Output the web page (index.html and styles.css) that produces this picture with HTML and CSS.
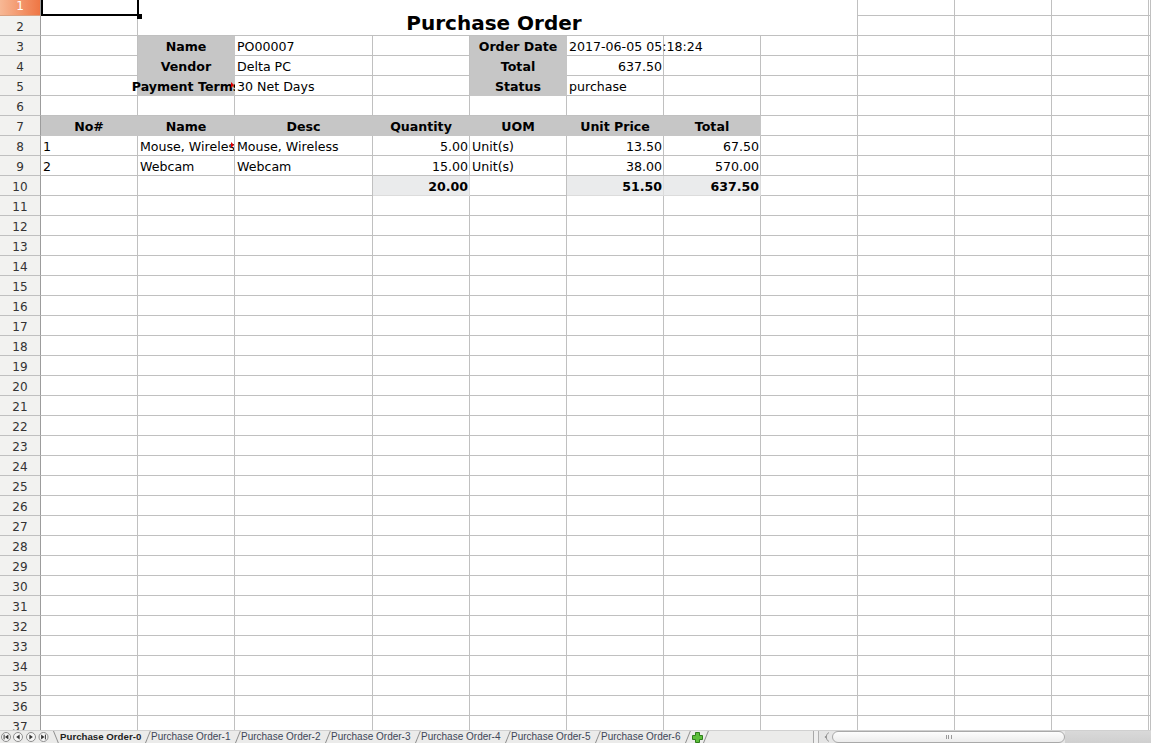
FILE: index.html
```html
<!DOCTYPE html>
<html>
<head>
<meta charset="utf-8">
<title>Purchase Order</title>
<link rel="stylesheet" href="styles.css">
</head>
<body>
<div class="sheet">
  <div class="grid">
    <div class="rh r1">1</div><div class="sel"></div><div class="title">Purchase Order</div><div></div><div></div><div></div><div></div>
    <div class="rh">2</div><div></div><div></div><div></div><div></div><div></div>
    <div class="rh">3</div><div></div><div class="hd">Name</div><div>PO00007</div><div></div><div class="hd">Order Date</div><div>2017-06-05 05:18:24</div><div></div><div></div><div></div><div></div><div></div><div></div>
    <div class="rh">4</div><div></div><div class="hd">Vendor</div><div>Delta PC</div><div></div><div class="hd">Total</div><div class="num">637.50</div><div></div><div></div><div></div><div></div><div></div><div></div>
    <div class="rh">5</div><div></div><div class="hd clipc arr"><span>Payment Terms</span></div><div>30 Net Days</div><div></div><div class="hd">Status</div><div>purchase</div><div></div><div></div><div></div><div></div><div></div><div></div>
    <div class="rh">6</div><div></div><div></div><div></div><div></div><div></div><div></div><div></div><div></div><div></div><div></div><div></div><div></div>
    <div class="rh">7</div><div class="hd">No#</div><div class="hd">Name</div><div class="hd">Desc</div><div class="hd">Quantity</div><div class="hd">UOM</div><div class="hd">Unit Price</div><div class="hd">Total</div><div></div><div></div><div></div><div></div><div></div>
    <div class="rh">8</div><div>1</div><div class="clip arr">Mouse, Wireless</div><div>Mouse, Wireless</div><div class="num">5.00</div><div>Unit(s)</div><div class="num">13.50</div><div class="num">67.50</div><div></div><div></div><div></div><div></div><div></div>
    <div class="rh">9</div><div>2</div><div>Webcam</div><div>Webcam</div><div class="num">15.00</div><div>Unit(s)</div><div class="num">38.00</div><div class="num">570.00</div><div></div><div></div><div></div><div></div><div></div>
    <div class="rh">10</div><div></div><div></div><div></div><div class="tot">20.00</div><div></div><div class="tot">51.50</div><div class="tot">637.50</div><div></div><div></div><div></div><div></div><div></div>
    <div class="rh">11</div><div></div><div></div><div></div><div></div><div></div><div></div><div></div><div></div><div></div><div></div><div></div><div></div>
    <div class="rh">12</div><div></div><div></div><div></div><div></div><div></div><div></div><div></div><div></div><div></div><div></div><div></div><div></div>
    <div class="rh">13</div><div></div><div></div><div></div><div></div><div></div><div></div><div></div><div></div><div></div><div></div><div></div><div></div>
    <div class="rh">14</div><div></div><div></div><div></div><div></div><div></div><div></div><div></div><div></div><div></div><div></div><div></div><div></div>
    <div class="rh">15</div><div></div><div></div><div></div><div></div><div></div><div></div><div></div><div></div><div></div><div></div><div></div><div></div>
    <div class="rh">16</div><div></div><div></div><div></div><div></div><div></div><div></div><div></div><div></div><div></div><div></div><div></div><div></div>
    <div class="rh">17</div><div></div><div></div><div></div><div></div><div></div><div></div><div></div><div></div><div></div><div></div><div></div><div></div>
    <div class="rh">18</div><div></div><div></div><div></div><div></div><div></div><div></div><div></div><div></div><div></div><div></div><div></div><div></div>
    <div class="rh">19</div><div></div><div></div><div></div><div></div><div></div><div></div><div></div><div></div><div></div><div></div><div></div><div></div>
    <div class="rh">20</div><div></div><div></div><div></div><div></div><div></div><div></div><div></div><div></div><div></div><div></div><div></div><div></div>
    <div class="rh">21</div><div></div><div></div><div></div><div></div><div></div><div></div><div></div><div></div><div></div><div></div><div></div><div></div>
    <div class="rh">22</div><div></div><div></div><div></div><div></div><div></div><div></div><div></div><div></div><div></div><div></div><div></div><div></div>
    <div class="rh">23</div><div></div><div></div><div></div><div></div><div></div><div></div><div></div><div></div><div></div><div></div><div></div><div></div>
    <div class="rh">24</div><div></div><div></div><div></div><div></div><div></div><div></div><div></div><div></div><div></div><div></div><div></div><div></div>
    <div class="rh">25</div><div></div><div></div><div></div><div></div><div></div><div></div><div></div><div></div><div></div><div></div><div></div><div></div>
    <div class="rh">26</div><div></div><div></div><div></div><div></div><div></div><div></div><div></div><div></div><div></div><div></div><div></div><div></div>
    <div class="rh">27</div><div></div><div></div><div></div><div></div><div></div><div></div><div></div><div></div><div></div><div></div><div></div><div></div>
    <div class="rh">28</div><div></div><div></div><div></div><div></div><div></div><div></div><div></div><div></div><div></div><div></div><div></div><div></div>
    <div class="rh">29</div><div></div><div></div><div></div><div></div><div></div><div></div><div></div><div></div><div></div><div></div><div></div><div></div>
    <div class="rh">30</div><div></div><div></div><div></div><div></div><div></div><div></div><div></div><div></div><div></div><div></div><div></div><div></div>
    <div class="rh">31</div><div></div><div></div><div></div><div></div><div></div><div></div><div></div><div></div><div></div><div></div><div></div><div></div>
    <div class="rh">32</div><div></div><div></div><div></div><div></div><div></div><div></div><div></div><div></div><div></div><div></div><div></div><div></div>
    <div class="rh">33</div><div></div><div></div><div></div><div></div><div></div><div></div><div></div><div></div><div></div><div></div><div></div><div></div>
    <div class="rh">34</div><div></div><div></div><div></div><div></div><div></div><div></div><div></div><div></div><div></div><div></div><div></div><div></div>
    <div class="rh">35</div><div></div><div></div><div></div><div></div><div></div><div></div><div></div><div></div><div></div><div></div><div></div><div></div>
    <div class="rh">36</div><div></div><div></div><div></div><div></div><div></div><div></div><div></div><div></div><div></div><div></div><div></div><div></div>
    <div class="rh">37</div><div></div><div></div><div></div><div></div><div></div><div></div><div></div><div></div><div></div><div></div><div></div><div></div>
  </div>
</div>
<div class="tabbar">
  <svg class="nav" width="53" height="13" viewBox="0 0 53 13">
    <g fill="#f6f6f6" stroke="#8d8d8d" stroke-width="1">
      <circle cx="6" cy="7" r="4.5"/><circle cx="18" cy="7" r="4.5"/><circle cx="31" cy="7" r="4.5"/><circle cx="43.5" cy="7" r="4.5"/>
    </g>
    <g fill="#333">
      <rect x="3.6" y="4.6" width="1" height="4.8"/><path d="M8.4 4.6 L5 7 L8.4 9.4 Z"/>
      <path d="M19.6 4.6 L16.2 7 L19.6 9.4 Z"/>
      <path d="M29.4 4.6 L32.8 7 L29.4 9.4 Z"/>
      <path d="M41.1 4.6 L44.5 7 L41.1 9.4 Z"/><rect x="44.9" y="4.6" width="1" height="4.8"/>
    </g>
  </svg>
  <div class="tabs">
    <span class="tab act">Purchase Order-0</span>
    <span class="tab">Purchase Order-1</span>
    <span class="tab">Purchase Order-2</span>
    <span class="tab">Purchase Order-3</span>
    <span class="tab">Purchase Order-4</span>
    <span class="tab">Purchase Order-5</span>
    <span class="tab">Purchase Order-6</span>
    <span class="tab add"><svg width="11" height="11" viewBox="0 0 11 11"><path d="M3.5 0.5 H7.5 V3.5 H10.5 V7.5 H7.5 V10.5 H3.5 V7.5 H0.5 V3.5 H3.5 Z" fill="#5cbf3a" stroke="#2f7d1c" stroke-width="1"/></svg></span>
    <span class="tab end"></span>
  </div>
  <div class="fill"></div>
  <div class="hscroll">
    <div class="split"></div>
    <div class="hbtn"><svg width="12" height="12" viewBox="0 0 12 12"><path d="M9 1.5 A5 5 0 0 0 9 10.5" fill="none" stroke="#999"/><path d="M6.5 4.5 L4.5 6 L6.5 7.5 Z" fill="#888"/></svg></div>
    <div class="thumb"><span class="grip"></span></div>
    <div class="rest"></div>
  </div>
</div>
</body>
</html>
```
FILE: styles.css
```css
* { box-sizing: border-box; }
html, body { margin: 0; padding: 0; }
body {
  width: 1151px;
  height: 743px;
  overflow: hidden;
  background: #fff;
  font-family: "DejaVu Sans", sans-serif;
  display: flex;
  flex-direction: column;
}
.sheet {
  height: 730px;
  flex: none;
  overflow: hidden;
}
.grid {
  display: grid;
  grid-template-columns: 41px 97px 97px 138px repeat(8, 97px) 2px;
  grid-template-rows: 16px repeat(36, 20px);
  font-size: 12.6px;
  color: #000;
}
.grid > div {
  border-right: 1px solid #c0c0c0;
  border-bottom: 1px solid #c0c0c0;
  padding: 3px 1px 0 2px;
  line-height: 15px;
  white-space: nowrap;
  min-width: 0;
}
.grid > div:empty { padding: 0; }
.grid > .rh {
  background: #f2f2f0;
  border-right-color: #9c9c9c;
  text-align: center;
  font-size: 12px;
  color: #333;
  padding: 4px 0 0;
}
.grid > .r1 {
  background: linear-gradient(90deg, #f7b895, #ef7644);
  border-bottom-color: #d9a080;
  color: #fff;
  padding: 0;
  line-height: 13px;
}
.grid > .sel { position: relative; }
.sel::after {
  content: "";
  position: absolute;
  left: 0;
  top: -3px;
  right: -2px;
  bottom: -1px;
  border: 2px solid #000;
}
.sel::before {
  content: "";
  position: absolute;
  right: -5px;
  bottom: -4px;
  width: 5px;
  height: 5px;
  background: #000;
  z-index: 1;
}
.grid > .title {
  grid-column: span 7;
  grid-row: span 2;
  font-size: 20px;
  font-weight: bold;
  line-height: 24px;
  text-align: center;
  padding: 11px 7px 0 0;
}
.grid > .hd {
  background: #c6c6c6;
  border-color: #c6c6c6;
  font-weight: bold;
  text-align: center;
  padding: 3px 0 0;
}
.grid > .num { text-align: right; padding-right: 1px; }
.grid > .tot {
  background: #eaebec;
  border-color: #dcdcdc;
  font-weight: bold;
  text-align: right;
  padding-right: 1px;
}
.grid > .clip { overflow: hidden; position: relative; }
.grid > .clipc {
  display: flex;
  justify-content: center;
  position: relative;
  clip-path: inset(0 0 0 -30px);
}
.arr::after {
  content: "";
  position: absolute;
  right: 0;
  top: 6px;
  border-left: 3px solid #e00000;
  border-top: 3px solid transparent;
  border-bottom: 3px solid transparent;
}

/* sheet tab bar */
.tabbar {
  height: 13px;
  flex: none;
  display: flex;
  align-items: stretch;
  background: #ebebea;
  border-top: 1px solid #d0d0d0;
  font-family: "Liberation Sans", Arial, sans-serif;
  font-size: 10px;
  overflow: hidden;
}
.nav { flex: none; margin-top: -1px; }
.tabs {
  display: flex;
  flex: none;
  height: 12px;
}
.tab {
  position: relative;
  z-index: 0;
  display: flex;
  align-items: center;
  padding: 0 4px 0 6px;
  width: 90px;
  color: #3d4658;
  line-height: 12px;
  white-space: nowrap;
}
.tab::before {
  content: "";
  position: absolute;
  left: 0;
  top: 0;
  bottom: 0;
  border-left: 1px solid #8e8e8e;
  transform: skewX(-22deg);
  transform-origin: bottom left;
}
.tab.act {
  width: 92px;
  padding-left: 7px;
  font-weight: bold;
  color: #1e1e1e;
  font-size: 9.7px;
}
.tab.act::before { transform: skewX(22deg); transform-origin: top left; }
.tab.add { width: 18px; padding: 0 0 0 7px; }
.tab.end { width: 6px; padding: 0; }
.fill { flex: 1; }
.hscroll {
  flex: none;
  width: 338px;
  display: flex;
  align-items: stretch;
  border-left: 1px solid #a8a8a8;
  background: #e6e6e6;
}
.split {
  width: 5px;
  border-right: 1px solid #b0b0b0;
  background: #efefef;
}
.hbtn { width: 13px; padding-left: 1px; display: flex; align-items: center; }
.thumb {
  width: 233px;
  height: 12px;
  border: 1px solid #a9a9a9;
  border-radius: 6px;
  background: linear-gradient(#fdfdfd, #ececec);
  display: flex;
  align-items: center;
  justify-content: center;
}
.grip {
  width: 6px;
  height: 4px;
  background: repeating-linear-gradient(90deg, #999 0 1px, transparent 1px 2.5px);
}
.rest { flex: 1; background: linear-gradient(#d9d9d9, #cfcfcf); }
```
